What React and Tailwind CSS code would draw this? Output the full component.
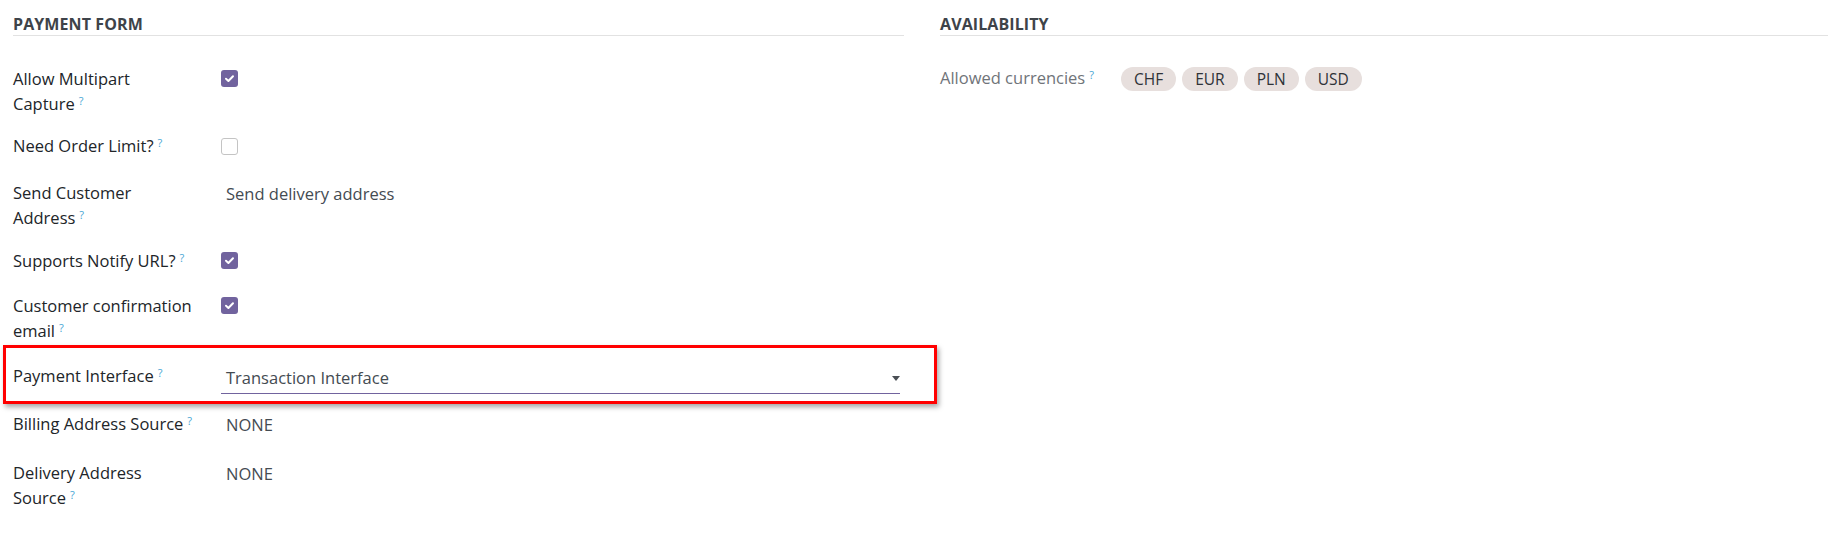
import React from 'react';

const LEFT_ROWS = [
  { label: 'Allow Multipart Capture', kind: 'check', checked: true, h: 'h-[67px]' },
  { label: 'Need Order Limit?', kind: 'check', checked: false, h: 'h-[47px]' },
  { label: 'Send Customer Address', kind: 'text', value: 'Send delivery address', h: 'h-[68px]' },
  { label: 'Supports Notify URL?', kind: 'check', checked: true, h: 'h-[45px]' },
  { label: 'Customer confirmation email', kind: 'check', checked: true, h: 'h-[68px]' },
  { label: 'Payment Interface', kind: 'select', value: 'Transaction Interface', h: 'h-[50px]', marked: true },
  { label: 'Billing Address Source', kind: 'text', value: 'NONE', h: 'h-[49px]' },
  { label: 'Delivery Address Source', kind: 'text', value: 'NONE', h: 'h-[60px]' },
];

const CURRENCIES = ['CHF', 'EUR', 'PLN', 'USD'];

function Help() {
  return <sup className="ml-[4px] text-[11px] leading-none text-[#48a6d4]">?</sup>;
}

function Checkbox({ checked }) {
  if (!checked) {
    return <span className="mt-[5px] block w-[17px] h-[17px] rounded-[3px] border border-[#c4c4c4] bg-white" />;
  }
  return (
    <span className="mt-[4px] flex items-center justify-center w-[17px] h-[17px] rounded-[3px] bg-[#71639e]">
      <svg width="11" height="11" viewBox="0 0 11 11" fill="none">
        <path d="M2 5.8 L4.4 8 L9 3.2" stroke="white" strokeWidth="2" strokeLinecap="round" strokeLinejoin="round" />
      </svg>
    </span>
  );
}

function SectionTitle({ children }) {
  return (
    <div className="pt-[13px] border-b border-[#e2e2e2]">
      <h2 className="text-[16px] leading-[22px] font-bold text-[#3e4349] tracking-[0.1px]">{children}</h2>
    </div>
  );
}

function Field({ row }) {
  if (row.kind === 'check') return <Checkbox checked={row.checked} />;
  if (row.kind === 'select') {
    return (
      <div className="flex items-center w-[679px] pt-[4px] pb-[3px] pl-[5px] border-b border-[#71639e]">
        <span className="flex-1 leading-[25px] text-[#444b52]">{row.value}</span>
        <svg width="8" height="5" viewBox="0 0 8 5" className="mt-[1px]">
          <path d="M0 0 H8 L4 5 Z" fill="#4a4f55" />
        </svg>
      </div>
    );
  }
  return <span className="pl-[5px] pt-[1px] leading-[25px] text-[#444b52]">{row.value}</span>;
}

export default function App() {
  return (
    <div className="w-[1843px] h-[535px] bg-white flex gap-[36px] pl-[13px] font-['Open_Sans',sans-serif] text-[16.5px]">
      {/* Payment form */}
      <div className="w-[891px]">
        <SectionTitle>PAYMENT FORM</SectionTitle>
        <div className="mt-[30px]">
          {LEFT_ROWS.map((row) => (
            <div key={row.label} className={`relative flex ${row.h}`}>
              <div className={`w-[208px] shrink-0 pr-[22px] leading-[25px] text-[#212529] ${row.kind === 'select' ? 'pt-[2px]' : ''}`}>
                {row.label}
                <Help />
              </div>
              <div className="flex-1 flex items-start">
                <Field row={row} />
              </div>
              {row.marked && (
                <div className="absolute left-[-10px] top-[-16px] w-[934px] h-[59px] border-[3px] border-[#ff0000] shadow-[2px_3px_5px_rgba(0,0,0,0.35)]" />
              )}
            </div>
          ))}
        </div>
      </div>

      {/* Availability */}
      <div className="w-[888px]">
        <SectionTitle>AVAILABILITY</SectionTitle>
        <div className="mt-[29px] flex">
          <div className="w-[181px] shrink-0 leading-[25px] text-[#707479]">
            Allowed currencies
            <Help />
          </div>
          <div className="flex gap-[6px] mt-[2px]">
            {CURRENCIES.map((c) => (
              <span key={c} className="px-[13px] h-[24px] leading-[24px] rounded-full bg-[#e7dfdd] text-[15.5px] text-[#2f3338]">
                {c}
              </span>
            ))}
          </div>
        </div>
      </div>
    </div>
  );
}
